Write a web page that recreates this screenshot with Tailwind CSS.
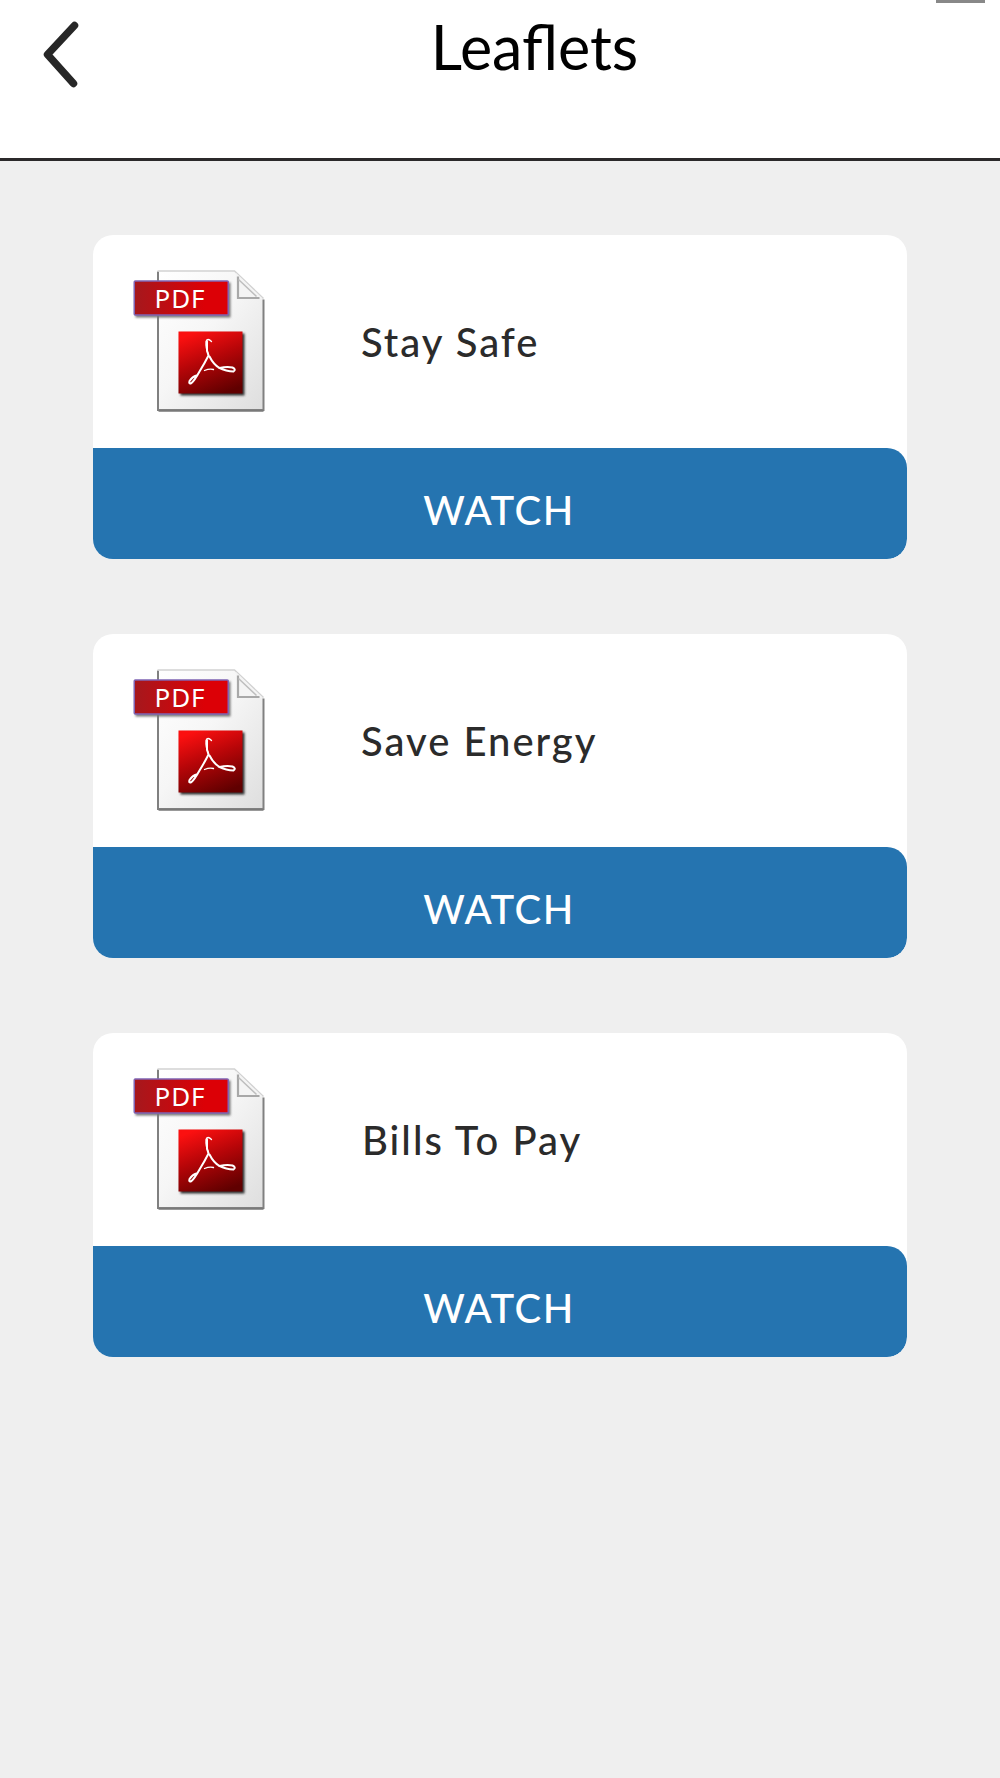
<!DOCTYPE html>
<html lang="en">
<head>
<meta charset="utf-8">
<title>Leaflets</title>
<script src="https://cdn.jsdelivr.net/npm/@tailwindcss/browser@4"></script>
</head>
<body class="bg-[#efefef] font-['Lato',sans-serif]">
<svg class="absolute size-0" aria-hidden="true">
  <defs>
    <linearGradient id="page" x1="0" y1="0" x2="1" y2="1"><stop offset="0" stop-color="#fff"/><stop offset=".45" stop-color="#f6f6f6"/><stop offset="1" stop-color="#dedede"/></linearGradient>
    <linearGradient id="tag" x1="0" y1="0" x2="1" y2="0"><stop offset="0" stop-color="#a5181d"/><stop offset=".75" stop-color="#dc0006"/><stop offset="1" stop-color="#dc0006"/></linearGradient>
    <linearGradient id="badge" x1=".3" y1="0" x2=".7" y2="1"><stop offset="0" stop-color="#fb1010"/><stop offset=".45" stop-color="#b50508"/><stop offset="1" stop-color="#600000"/></linearGradient>
    <filter id="soft" x="-20%" y="-20%" width="150%" height="150%"><feGaussianBlur stdDeviation="1"/></filter>
    <g id="pdf">
      <path d="M26 6H103L131 34V145H26Z" fill="url(#page)"/>
      <path d="M25.500 6V144.500H131V34" fill="none" stroke="#808080" stroke-width="2"/>
      <path d="M26 145.500H131" stroke="#777" stroke-width="1.500"/>
      <path d="M25 5.500H102L131 33" fill="none" stroke="#d2d2d2" stroke-width="1.500"/>
      <path d="M103 7L106 33H130Z" fill="#f4f4f4"/>
      <path d="M105.500 11V32.500H127" fill="none" stroke="#a8a8a8" stroke-width="2.200"/>
      <path d="M106 14L124 31" stroke="#bdbdbd" stroke-width="1.500"/>
      <rect x="3" y="17" width="95" height="35" fill="#777" filter="url(#soft)"/>
      <rect x="1.750" y="15.500" width="94" height="34" rx="1" fill="url(#tag)" stroke="#8065b5" stroke-width="1.500"/>
      <rect x="48" y="68" width="64" height="62" fill="#333" filter="url(#soft)"/>
      <rect x="46" y="66" width="64" height="62" fill="url(#badge)"/>
      <g fill="none" stroke="#fff" stroke-linecap="round" stroke-linejoin="round">
        <path d="M79 76Q75 72 73.500 76Q73 83 76 89" stroke-width="1.300"/>
        <path d="M74.500 76V85L76 90Q72 98 67 106Q62 115 59 117.500Q56 119 57 115.500Q60 111 64 110" stroke-width="2"/>
        <path d="M77 91Q81 99 87 102.500Q94 101 100 102Q104 104 101 106Q94 106 86 102" stroke-width="2"/>
        <path d="M72 105Q77 103 81 104" stroke-width="1.300"/>
      </g>
    </g>
  </defs>
</svg>

<header class="relative h-[161px] bg-white border-b-3 border-[#2b292a] overflow-hidden flex justify-center">
  <svg class="absolute left-[40px] top-[16px] w-[44px] h-[76px]" viewBox="0 0 44 76"><path d="M34.500 9.500L7.500 38.500L33.500 67.500" fill="none" stroke="#272727" stroke-width="7.500" stroke-linecap="round" stroke-linejoin="round"/></svg>
  <h1 class="pt-[10px] pl-[69px] text-[61px] leading-[74px] text-black">Leaflets</h1>
  <span class="absolute left-[936px] top-0 w-[49px] h-[2.500px] bg-[#888]"></span>
</header>

<main class="px-[93px] pt-[74px] flex flex-col gap-[75px]">
  <section class="h-[324px] rounded-[20px] bg-white overflow-hidden flex flex-col">
    <div class="h-[213px] pl-[40px] pt-[31px] flex">
      <svg class="w-[140px] h-[150px]" viewBox="0.500 0.500 140 150"><use href="#pdf"/><text x="22" y="42.500" font-family="Noto Sans" font-size="26" textLength="50" lengthAdjust="spacing" fill="#fff">PDF</text></svg>
      <h2 class="pl-[88px] pt-[52px] text-[40px] leading-[48px] tracking-[2px] font-medium text-[#2b2b2b]">Stay Safe</h2>
    </div>
    <button class="h-[111px] rounded-r-[20px] bg-[#2574b0] text-white text-[40px] font-medium tracking-[1.500px] pt-[13px] pr-[2px]">WATCH</button>
  </section>
  <section class="h-[324px] rounded-[20px] bg-white overflow-hidden flex flex-col">
    <div class="h-[213px] pl-[40px] pt-[31px] flex">
      <svg class="w-[140px] h-[150px]" viewBox="0.500 0.500 140 150"><use href="#pdf"/><text x="22" y="42.500" font-family="Noto Sans" font-size="26" textLength="50" lengthAdjust="spacing" fill="#fff">PDF</text></svg>
      <h2 class="pl-[88px] pt-[52px] text-[40px] leading-[48px] tracking-[2px] font-medium text-[#2b2b2b]">Save Energy</h2>
    </div>
    <button class="h-[111px] rounded-r-[20px] bg-[#2574b0] text-white text-[40px] font-medium tracking-[1.500px] pt-[13px] pr-[2px]">WATCH</button>
  </section>
  <section class="h-[324px] rounded-[20px] bg-white overflow-hidden flex flex-col">
    <div class="h-[213px] pl-[40px] pt-[31px] flex">
      <svg class="w-[140px] h-[150px]" viewBox="0.500 0.500 140 150"><use href="#pdf"/><text x="22" y="42.500" font-family="Noto Sans" font-size="26" textLength="50" lengthAdjust="spacing" fill="#fff">PDF</text></svg>
      <h2 class="pl-[89px] pt-[52px] text-[40px] leading-[48px] tracking-[2px] font-medium text-[#2b2b2b]">Bills To Pay</h2>
    </div>
    <button class="h-[111px] rounded-r-[20px] bg-[#2574b0] text-white text-[40px] font-medium tracking-[1.500px] pt-[13px] pr-[2px]">WATCH</button>
  </section>
</main>
</body>
</html>
